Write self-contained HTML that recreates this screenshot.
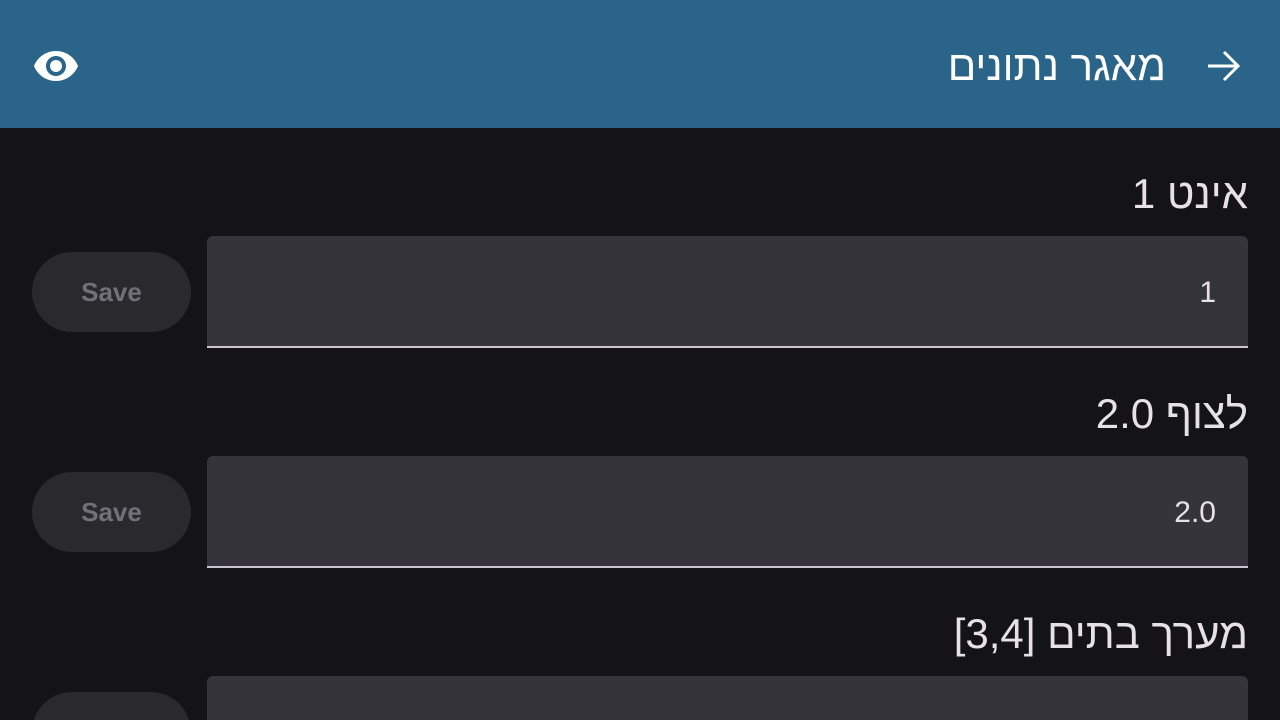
<!DOCTYPE html>
<html><head><meta charset="utf-8"><style>
html,body{margin:0;width:1280px;height:720px;overflow:hidden}
body{background:#141318;font-family:"Liberation Sans","Noto Sans CJK SC",sans-serif;position:relative}
.hdr{position:absolute;left:0;top:0;width:1280px;height:128px;background:#2a6589}
.t{position:absolute;right:114px;top:42px;color:#fff;font-size:42px;direction:rtl;white-space:nowrap}
.lab{position:absolute;right:32px;color:#e6e1e6;font-size:42px;direction:rtl;white-space:nowrap}
.f{position:absolute;left:207px;width:1041px;height:112px;background:#36343b;border-radius:6px 6px 0 0;border-bottom:2px solid #cac4cf;box-sizing:border-box}
.v{position:absolute;right:32px;top:40px;color:#e6e1e6;font-size:30px}
.s{position:absolute;left:32px;width:159px;height:80px;border-radius:40px;background:#2a292e;color:#737178;font-size:26px;font-weight:bold;text-align:center;line-height:80px}
</style></head><body>
<div class="hdr">
<svg style="position:absolute;left:32px;top:42px" width="48" height="48" viewBox="0 0 24 24"><path fill="#fff" d="M12 4.5C7 4.5 2.73 7.61 1 12c1.73 4.39 6 7.5 11 7.5s9.27-3.11 11-7.5c-1.73-4.39-6-7.5-11-7.5zM12 17c-2.76 0-5-2.24-5-5s2.24-5 5-5 5 2.24 5 5-2.24 5-5 5zm0-8c-1.66 0-3 1.34-3 3s1.34 3 3 3 3-1.34 3-3-1.34-3-3-3z"/></svg>
<div class="t">מאגר נתונים</div>
<svg style="position:absolute;left:1206px;top:49px" width="34" height="34" viewBox="0 0 34 34"><path fill="none" stroke="#fff" stroke-width="3" d="M2 17H32M18 3L32 17L18 31"/></svg>
</div>
<div class="lab" style="top:170px">אינט 1</div>
<div class="s" style="top:252px">Save</div>
<div class="f" style="top:236px"><div class="v">1</div></div>
<div class="lab" style="top:390px">לצוף 2.0</div>
<div class="s" style="top:472px">Save</div>
<div class="f" style="top:456px"><div class="v">2.0</div></div>
<div class="lab" style="top:610px">מערך בתים [3,4]</div>
<div class="s" style="top:692px">Save</div>
<div class="f" style="top:676px"><div class="v">[3,4]</div></div>
</body></html>
